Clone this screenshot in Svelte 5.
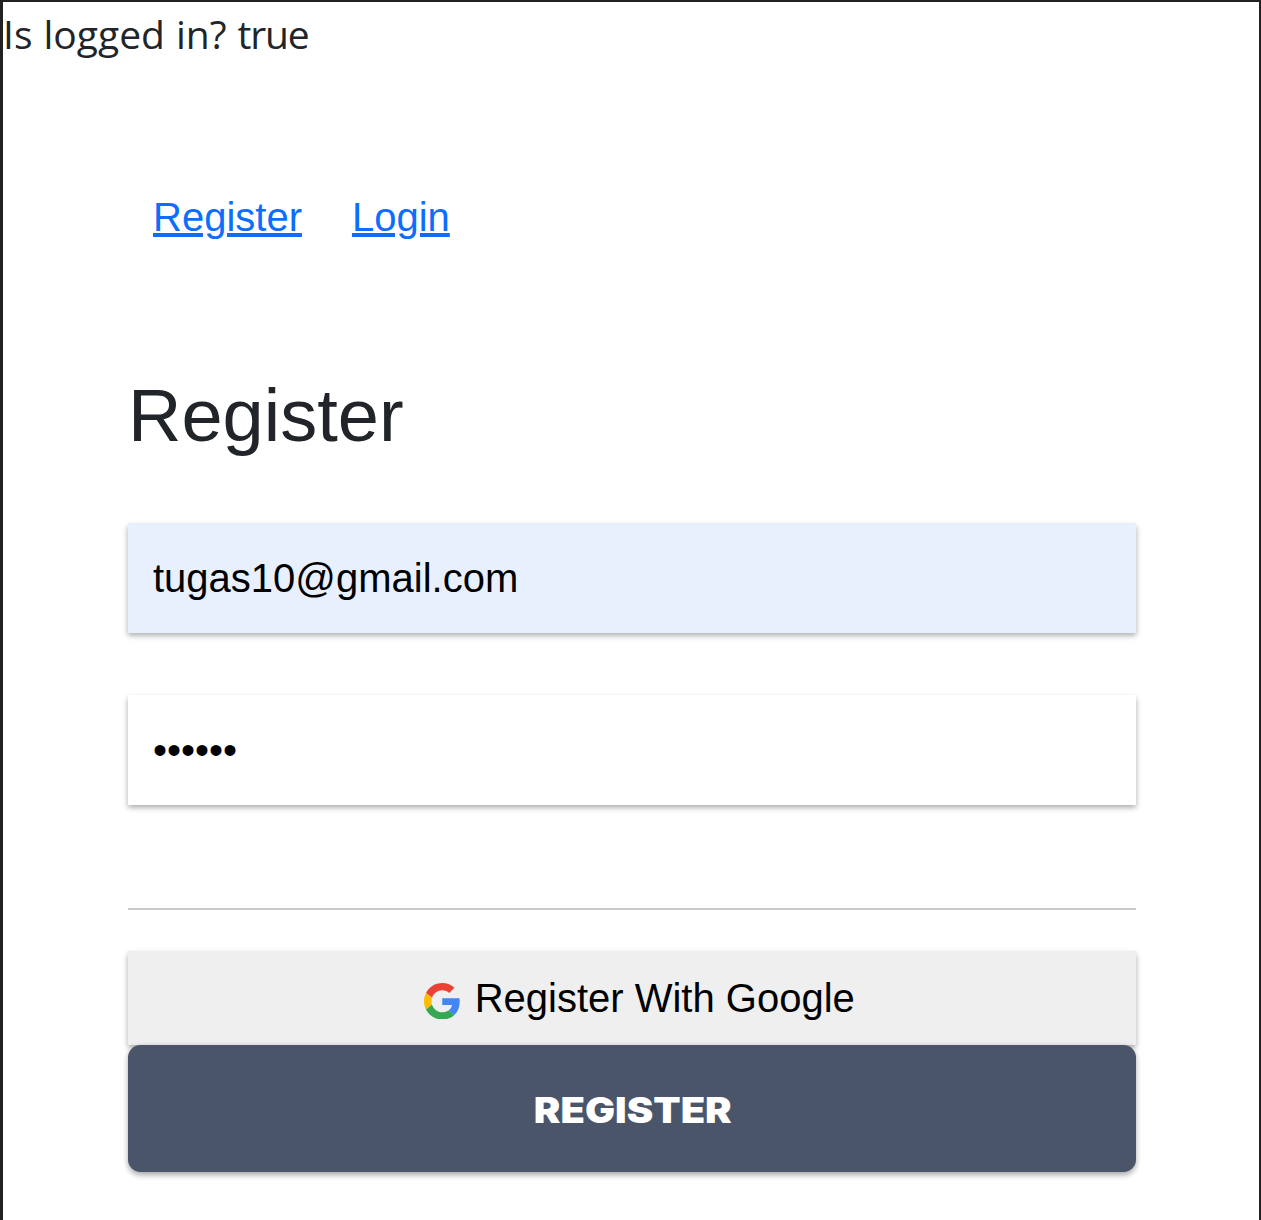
<script>
  let loggedIn = $state(true);
  let email = $state('tugas10@gmail.com');
  let password = $state('secret');
</script>

<div class="window">
  <div class="status">Is logged in? <span>{loggedIn}</span></div>
  <nav>
    <a href="#register">Register</a>
    <a href="#login">Login</a>
  </nav>
  <main>
    <h1>Register</h1>
    <form onsubmit={(e) => e.preventDefault()}>
      <input class="email" type="email" bind:value={email} />
      <input class="password" type="password" bind:value={password} />
      <hr />
      <button class="google" type="button">
        <svg viewBox="0 0 48 48" aria-hidden="true">
          <path fill="#EA4335" d="M24 9.5c3.54 0 6.71 1.22 9.21 3.6l6.85-6.85C35.9 2.38 30.47 0 24 0 14.62 0 6.51 5.38 2.56 13.22l7.98 6.19C12.43 13.72 17.74 9.5 24 9.5z" />
          <path fill="#4285F4" d="M46.98 24.55c0-1.57-.15-3.09-.38-4.55H24v9.02h12.94c-.58 2.96-2.26 5.48-4.78 7.18l7.73 6c4.51-4.18 7.09-10.36 7.09-17.65z" />
          <path fill="#FBBC05" d="M10.53 28.59c-.48-1.45-.76-2.99-.76-4.59s.27-3.14.76-4.59l-7.98-6.19C.92 16.46 0 20.12 0 24c0 3.88.92 7.54 2.56 10.78l7.97-6.19z" />
          <path fill="#34A853" d="M24 48c6.48 0 11.93-2.13 15.89-5.81l-7.73-6c-2.15 1.45-4.92 2.3-8.16 2.3-6.26 0-11.57-4.22-13.47-9.91l-7.98 6.19C6.51 42.62 14.62 48 24 48z" />
        </svg>
        <span>Register With Google</span>
      </button>
      <button class="submit" type="submit"><span>REGISTER</span></button>
    </form>
  </main>
</div>

<style>
  :global(body) {
    margin: 0;
    background: #fff;
  }
  .window {
    box-sizing: border-box;
    width: 1261px;
    height: 1220px;
    overflow: hidden;
    border: solid #212122;
    border-width: 2px 2px 0 3px;
    background: #fff;
    color: #212529;
    font: 40px/60px 'Liberation Sans', Arial, sans-serif;
  }
  .status {
    height: 60px;
    font-family: 'Open Sans', 'Segoe UI', sans-serif;
    font-size: 39px;
    line-height: 63px;
    letter-spacing: 0;
    word-spacing: 0.9px;
  }
  .status span {
    letter-spacing: -1.2px;
  }
  nav {
    display: flex;
    gap: 50px;
    padding: 125px 150px 0;
  }
  a {
    color: #0d6efd;
    text-decoration: underline;
    text-decoration-thickness: 4px;
  }
  main {
    padding: 125px 123px 0 125px;
  }
  h1 {
    margin: 0;
    font-size: 74px;
    line-height: 88px;
    font-weight: 400;
  }
  form {
    display: flex;
    flex-direction: column;
    padding-top: 63px;
  }
  input,
  button {
    box-sizing: border-box;
    width: 100%;
    margin: 0;
    border: 0;
    outline: 0;
    color: #000;
    font: 40px/60px 'Liberation Sans', Arial, sans-serif;
    box-shadow: 0 2.5px 7.5px rgba(0, 0, 0, 0.12), 0 2.5px 5px rgba(0, 0, 0, 0.24);
  }
  input {
    height: 110px;
    padding: 25px;
    background: #fff;
  }
  .email {
    margin-bottom: 62px;
    background: #e8f0fe;
  }
  hr {
    width: 100%;
    height: 2px;
    margin: 103px 0 41px;
    border: 0;
    background: #c8c9ca;
  }
  .google {
    display: flex;
    align-items: center;
    justify-content: center;
    gap: 15px;
    height: 94px;
    padding: 0 0 0 14px;
    background: #efefef;
  }
  .google svg {
    width: 36.5px;
    height: 36.5px;
    margin: 6px -0.7px 0 0.7px;
  }
  .submit {
    height: 127px;
    padding: 3px 0 0 1px;
    border-radius: 12.5px;
    background: #4b5569;
    color: #fff;
    font-family: Inter, 'Arial Black', sans-serif;
    font-size: 35px;
    font-weight: 900;
  }
  /* widens the heavy caps to the proportions of an extended black face */
  .submit span {
    display: inline-block;
    transform: scaleX(1.14);
  }
</style>
